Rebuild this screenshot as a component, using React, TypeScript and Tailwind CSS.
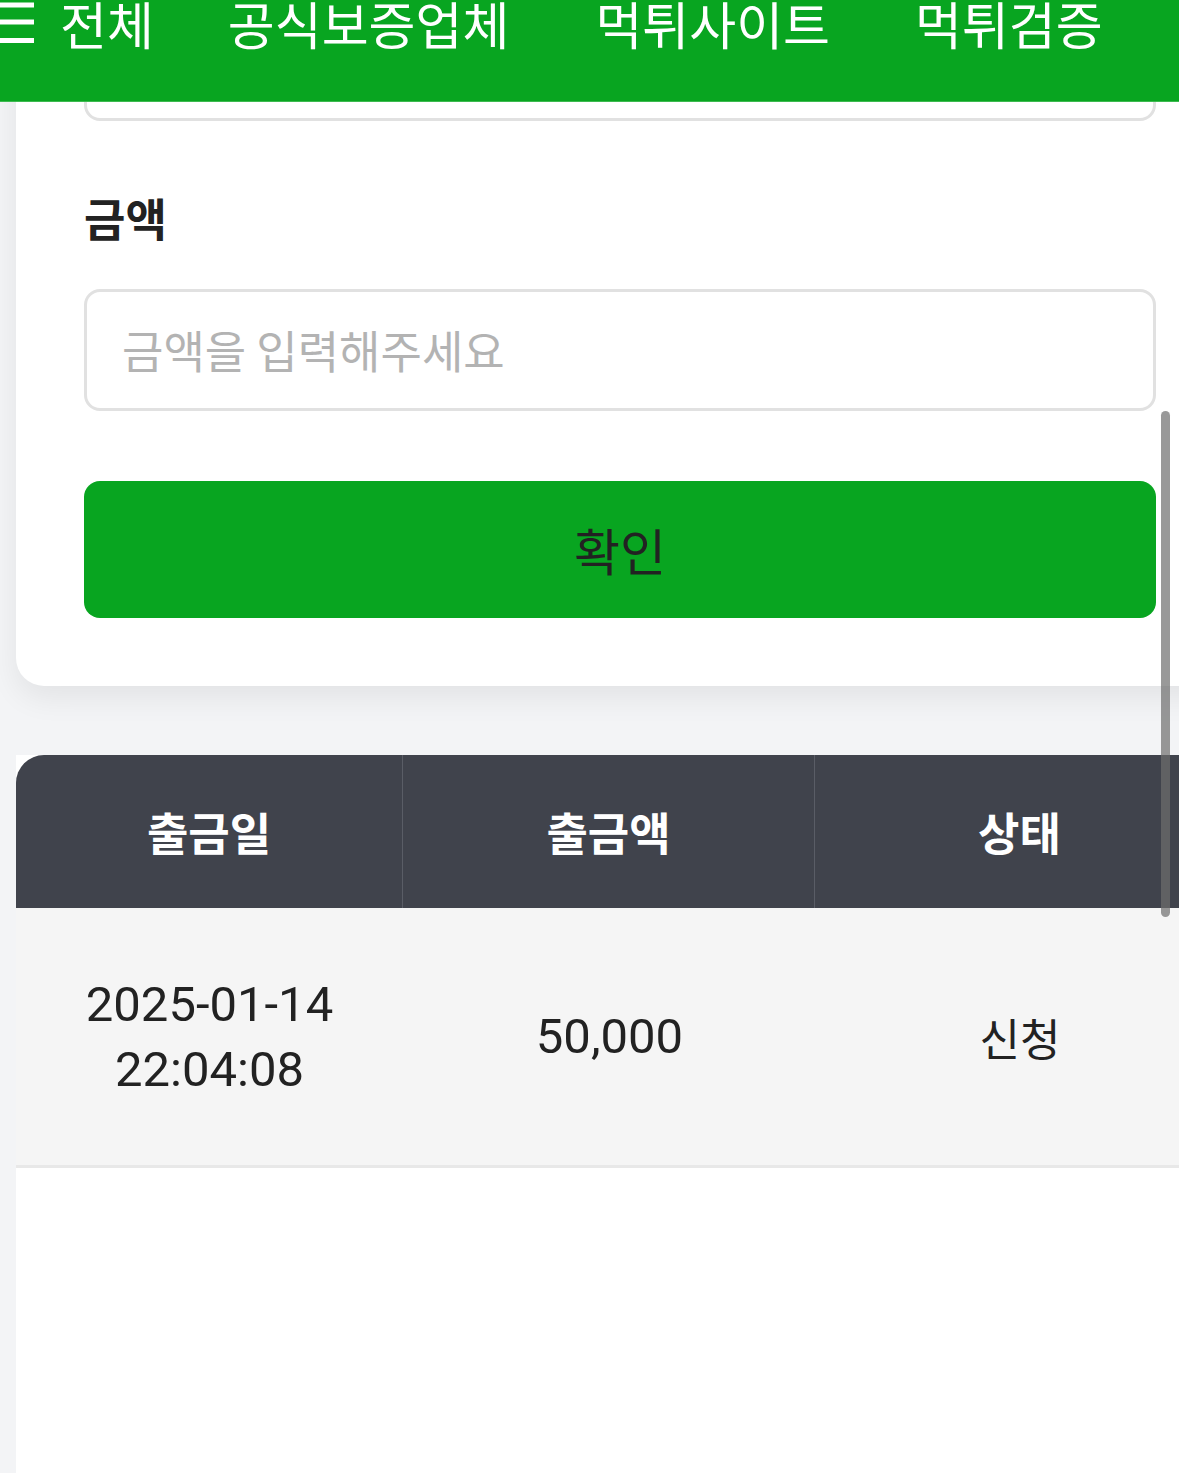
import React from "react";

const KR = { fontFamily: '"Noto Sans CJK KR", "Noto Sans", sans-serif' };
const NUM = { fontFamily: 'Roboto, "Noto Sans CJK KR", sans-serif' };

export default function App() {
  return (
    <div className="relative w-[1179px] h-[1473px] overflow-hidden bg-[#f3f4f6]" style={KR}>
      {/* page content (wider than viewport) */}
      <div className="w-[1240px] pl-[16px] pr-[16px]">
        {/* form card */}
        <div className="-mt-[1px] bg-white rounded-b-[28px] px-[68px] pb-[68px] shadow-[0_12px_30px_rgba(0,0,0,0.07)]">
          <div className="h-[122px] border-[3px] border-[#e1e1e1] rounded-[16px] bg-white" />
          <div className="pt-[70px] text-[45px] leading-[54px] font-bold text-[#222]">금액</div>
          <div className="mt-[44px] h-[122px] border-[3px] border-[#e1e1e1] rounded-[16px] flex items-center px-[35px]">
            <span className="text-[45px] text-[#b3b3b3]">금액을 입력해주세요</span>
          </div>
          <button className="mt-[70px] w-full h-[137px] rounded-[16px] bg-[#08a520] flex items-center justify-center">
            <span className="text-[50px] text-[#222]">확인</span>
          </button>
        </div>

        {/* table */}
        <div className="mt-[69px] bg-white h-[800px]">
          <div className="flex bg-[#40434c] rounded-tl-[28px] h-[153px] text-white font-bold text-[45px]">
            <div className="w-[387px] flex items-center justify-center border-r border-[#5a5d66]">출금일</div>
            <div className="w-[412px] flex items-center justify-center border-r border-[#5a5d66]">출금액</div>
            <div className="flex-1 flex items-center justify-center">상태</div>
          </div>
          <div className="flex bg-[#f5f5f5] h-[260px] border-b-[3px] border-[#e8e8e8] text-[#222]">
            <div className="w-[387px] flex flex-col items-center justify-center text-[49px] leading-[65px]" style={NUM}>
              <span>2025-01-14</span>
              <span>22:04:08</span>
            </div>
            <div className="w-[413px] flex items-center justify-center text-[49px]" style={NUM}>50,000</div>
            <div className="flex-1 flex items-center justify-center text-[44px]">신청</div>
          </div>
        </div>
      </div>

      {/* top nav overlay */}
      <div className="absolute left-0 top-0 w-full h-[102px] bg-[#08a520] border-b border-[#3cba4f]">
        <div className="flex items-start">
          <svg width="34" height="48" viewBox="0 0 34 48" className="shrink-0">
            <rect x="0" y="2.5" width="34" height="5" fill="white" />
            <rect x="0" y="19.5" width="34" height="5" fill="white" />
            <rect x="0" y="38" width="34" height="5" fill="white" />
          </svg>
          <div className="flex text-white text-[51px] leading-[51px] -mt-[2px] ml-[26px] whitespace-nowrap">
            <span>전체</span>
            <span className="ml-[74px]">공식보증업체</span>
            <span className="ml-[86px]">먹튀사이트</span>
            <span className="ml-[85px]">먹튀검증</span>
          </div>
        </div>
      </div>

      {/* overlay scrollbar */}
      <div className="absolute left-[1161px] top-[411px] w-[9px] h-[506px] rounded-full bg-[rgba(110,110,110,0.7)]" />
    </div>
  );
}
